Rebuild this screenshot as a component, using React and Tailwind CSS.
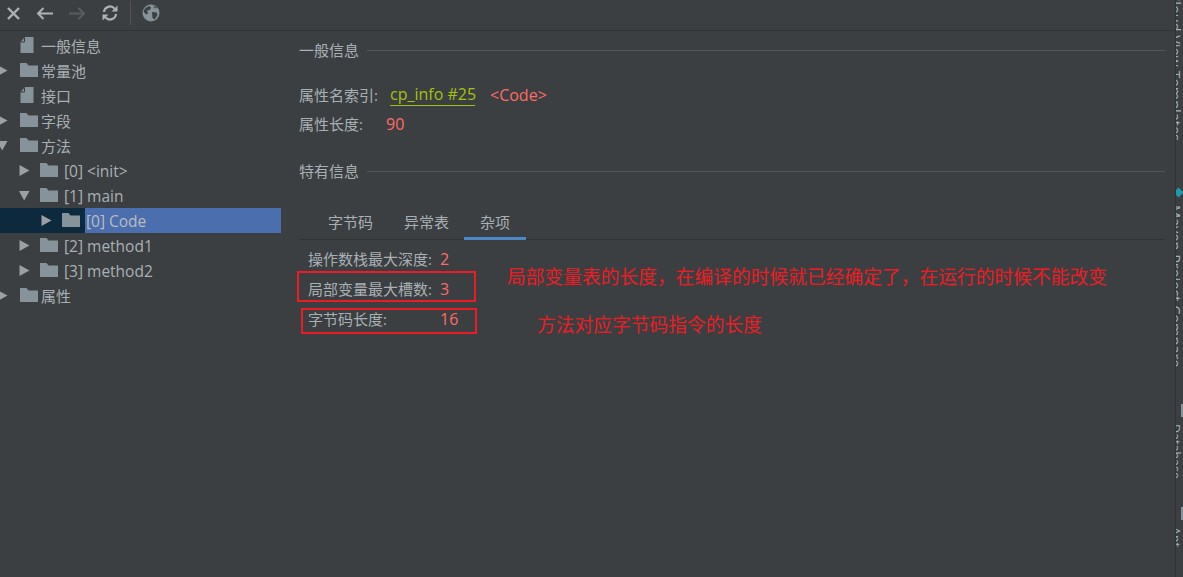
const FONT = "font-['Open_Sans','Noto_Sans_CJK_SC',sans-serif]";

const TREE = [
  { label: "一般信息", depth: 0, leaf: true },
  { label: "常量池", depth: 0 },
  { label: "接口", depth: 0, leaf: true },
  { label: "字段", depth: 0 },
  { label: "方法", depth: 0, open: true },
  { label: "[0] <init>", depth: 1 },
  { label: "[1] main", depth: 1, open: true },
  { label: "[0] Code", depth: 2, selected: true },
  { label: "[2] method1", depth: 1 },
  { label: "[3] method2", depth: 1 },
  { label: "属性", depth: 0 },
];

function Arrow({ open }) {
  return (
    <svg width="11" height="11" viewBox="0 0 11 11" className="shrink-0">
      {open ? (
        <path d="M0 1h10.5L5.2 10.5z" fill="#9da0a2" />
      ) : (
        <path d="M0.5 0L10.5 5.5L0.5 11z" fill="#9da0a2" />
      )}
    </svg>
  );
}

function FolderIcon() {
  return (
    <svg width="18" height="15" viewBox="0 0 18 15" className="shrink-0 -translate-y-[1px]">
      <path d="M0 1h6.500l2 2.500H18V15H0z" fill="#87939a" />
    </svg>
  );
}

function FileIcon() {
  return (
    <svg width="14" height="16" viewBox="0 0 14 16" className="shrink-0 -translate-x-[2px] -translate-y-[1px]">
      <path d="M5 0h8.500v16H0.500V5z" fill="#87939a" />
      <path d="M4.500 0.500v4.500H0.500" fill="none" stroke="#3c3f41" strokeWidth="1" />
    </svg>
  );
}

function TreeRow({ item }) {
  const indent = ["pl-0", "pl-[20px]", "pl-[42px]"][item.depth];
  return (
    <div className="relative flex h-[25px] items-center">
      {item.selected && (
        <>
          <div className="absolute inset-y-0 left-0 w-[85px] bg-[#0d293e]" />
          <div className="absolute inset-y-0 left-[85px] right-0 bg-[#4b6eaf]" />
        </>
      )}
      <div className={`relative flex items-center ${indent}`}>
        <div className={`flex w-[17px] justify-start ${item.depth === 0 ? "-translate-x-[3px]" : "-translate-x-[1px]"}`}>
          {!item.leaf && <Arrow open={item.open} />}
        </div>
        <div className="flex w-[24px] justify-center">
          {item.leaf ? <FileIcon /> : <FolderIcon />}
        </div>
        {item.depth === 0 ? (
          <span className="whitespace-nowrap pt-[2px] text-[15px] text-[#a9b0b5]">{item.label}</span>
        ) : (
          <span
            className={`ml-[3px] whitespace-nowrap pt-[2px] text-[15.5px] ${
              item.selected ? "text-[#bbbbbb]" : "text-[#a9b0b5]"
            }`}
          >
            {item.label}
          </span>
        )}
      </div>
    </div>
  );
}

function SectionTitle({ children }) {
  return (
    <div className="flex h-[20px] items-center">
      <span className="text-[15px] text-[#a9b0b5]">{children}</span>
      <div className="ml-[8px] h-px flex-1 bg-[#545556]" />
    </div>
  );
}

function Toolbar() {
  return (
    <div className="flex h-[31px] items-center border-b border-[#323232] bg-[#3c3f41] pb-[4px] pl-[6px]">
      <svg width="15" height="15" viewBox="0 0 15 15" className="mr-[15px]">
        <path d="M2 2l11 11M13 2L2 13" stroke="#afb1b3" strokeWidth="2.400" />
      </svg>
      <svg width="17" height="13" viewBox="0 0 17 13" className="mr-[16px]">
        <path d="M17 6.500H2M7.500 1L2 6.500L7.500 12" fill="none" stroke="#afb1b3" strokeWidth="2" />
      </svg>
      <svg width="17" height="13" viewBox="0 0 17 13" className="mr-[16px]">
        <path d="M0 6.500h15M9.500 1L15 6.500L9.500 12" fill="none" stroke="#5a5d5f" strokeWidth="2" />
      </svg>
      <svg width="16" height="16" viewBox="0 0 16 16" className="mr-[12px]">
        <path d="M2 7a6 6 0 0 1 10.500-3.400M14 9a6 6 0 0 1-10.500 3.400" fill="none" stroke="#afb1b3" strokeWidth="2.200" />
        <path d="M15.500 0.500v6h-6zM0.500 15.500v-6h6z" fill="#afb1b3" />
      </svg>
      <div className="mr-[11px] h-[24px] w-px bg-[#515355]" />
      <svg width="18" height="18" viewBox="0 0 18 18">
        <circle cx="9" cy="9" r="8.500" fill="#87939a" />
        <path d="M3 4.500l4-2.500l2 1.500l-1 2.500l-3 .5l1 3l-2 1l-2.500-3zM10 8l4.500 .5l1 2.500l-3 4.500l-2-1.500zM11 1.500l4 2l-2 1z" fill="#3c3f41" />
      </svg>
    </div>
  );
}

// Tool window names, only the lower edge of the letters is in view
function RightStripe() {
  return (
    <div className="relative -mt-[31px] flex w-[8px] shrink-0 flex-col overflow-hidden border-l border-[#323232] bg-[#3c3f41] pl-[3px] text-[14.5px] leading-[16px] text-[#9db4bd]">
      <span className="-mt-[62px] h-[205px] shrink-0 whitespace-nowrap [writing-mode:vertical-rl]">Alibaba Cloud View Templates</span>
      <span className="mt-[62px] h-[165px] shrink-0 whitespace-nowrap [writing-mode:vertical-rl]">Maven Project Compare</span>
      <div className="ml-[2px] mt-[34px] h-[13px] w-[4px] shrink-0 bg-[#87939a]" />
      <span className="mt-[7px] h-[56px] shrink-0 whitespace-nowrap text-[12.5px] [writing-mode:vertical-rl]">Database</span>
      <div className="ml-[2px] mt-[27px] h-[13px] w-[4px] shrink-0 bg-[#87939a]" />
      <span className="mt-[7px] shrink-0 whitespace-nowrap text-[12.5px] [writing-mode:vertical-rl]">Ant</span>
      <div className="absolute left-[-1px] top-[189px] h-[7px] w-[7px] rotate-45 bg-[#1c9aa8]" />
    </div>
  );
}

export default function App() {
  return (
    <div className={`flex h-[577px] w-[1183px] flex-col overflow-hidden bg-[#3c3f41] ${FONT}`}>
      <div className="mr-[8px]">
        <Toolbar />
      </div>
      <div className="relative flex min-h-0 flex-1">
        {/* Tree */}
        <div className="w-[281px] shrink-0 pt-[2px]">
          {TREE.map((item) => (
            <TreeRow key={item.label} item={item} />
          ))}
        </div>

        {/* Detail */}
        <div className="min-w-0 flex-1 pl-[18px] pr-[10px] pt-[9px]">
          <SectionTitle>一般信息</SectionTitle>
          <div className="mt-[23px] flex h-[25px] items-center">
            <span className="w-[91px] text-[15px] text-[#a9b0b5]">属性名索引:</span>
            <span className="mt-[1px] h-[22px] w-[85px] self-start whitespace-nowrap border-b border-[#a4c10f] text-[16px] leading-[21px] text-[#a4c10f]">cp_info #25</span>
            <span className="ml-[15px] pb-[2px] text-[16px] text-[#ff6b68]">&lt;Code&gt;</span>
          </div>
          <div className="mt-[4px] flex h-[25px] items-center">
            <span className="w-[87px] text-[15px] text-[#a9b0b5]">属性长度:</span>
            <span className="pb-[2px] text-[16px] text-[#ff6b68]">90</span>
          </div>
          <div className="mt-[24px]">
            <SectionTitle>特有信息</SectionTitle>
          </div>

          {/* Tabs */}
          <div className="mt-[23px] flex h-[36px] border-b border-[#323232] pl-[14px] text-[15px] text-[#a9b0b5]">
            <div className="flex h-[36px] w-[76px] items-center px-[15px]">字节码</div>
            <div className="flex h-[36px] w-[75px] items-center px-[15px]">异常表</div>
            <div className="flex h-[36px] w-[62px] items-center justify-center border-b-[3px] border-[#4a88c7] pt-[3px]">杂项</div>
          </div>

          <div className="pl-[9px] pt-[7px]">
            <div className="flex h-[25px] items-center">
              <span className="w-[132px] text-[15px] text-[#a9b0b5]">操作数栈最大深度:</span>
              <span className="pb-[2px] text-[16px] text-[#ff6b68]">2</span>
            </div>
            <div className="mt-[5px] flex h-[25px] items-center">
              <span className="w-[132px] text-[15px] text-[#a9b0b5]">局部变量最大槽数:</span>
              <span className="pb-[2px] text-[16px] text-[#ff6b68]">3</span>
            </div>
            <div className="mt-[5px] flex h-[25px] items-center">
              <span className="w-[132px] text-[15px] text-[#a9b0b5]">字节码长度:</span>
              <span className="pb-[2px] text-[16px] text-[#ff6b68]">16</span>
            </div>
          </div>
        </div>

        <RightStripe />

        {/* Red annotations drawn on top of the screenshot */}
        <div className="absolute left-[297px] top-[240px] h-[31px] w-[179px] border-2 border-[#ed1c24]" />
        <div className="absolute left-[301px] top-[277px] h-[26px] w-[176px] border-2 border-[#ed1c24]" />
        <div className="absolute left-[507px] top-[233px] whitespace-nowrap text-[18.75px] leading-[26px] text-[#ed1c24]">
          局部变量表的长度，在编译的时候就已经确定了，在运行的时候不能改变
        </div>
        <div className="absolute left-[537px] top-[281px] whitespace-nowrap text-[18.75px] leading-[26px] text-[#ed1c24]">
          方法对应字节码指令的长度
        </div>
      </div>
    </div>
  );
}
